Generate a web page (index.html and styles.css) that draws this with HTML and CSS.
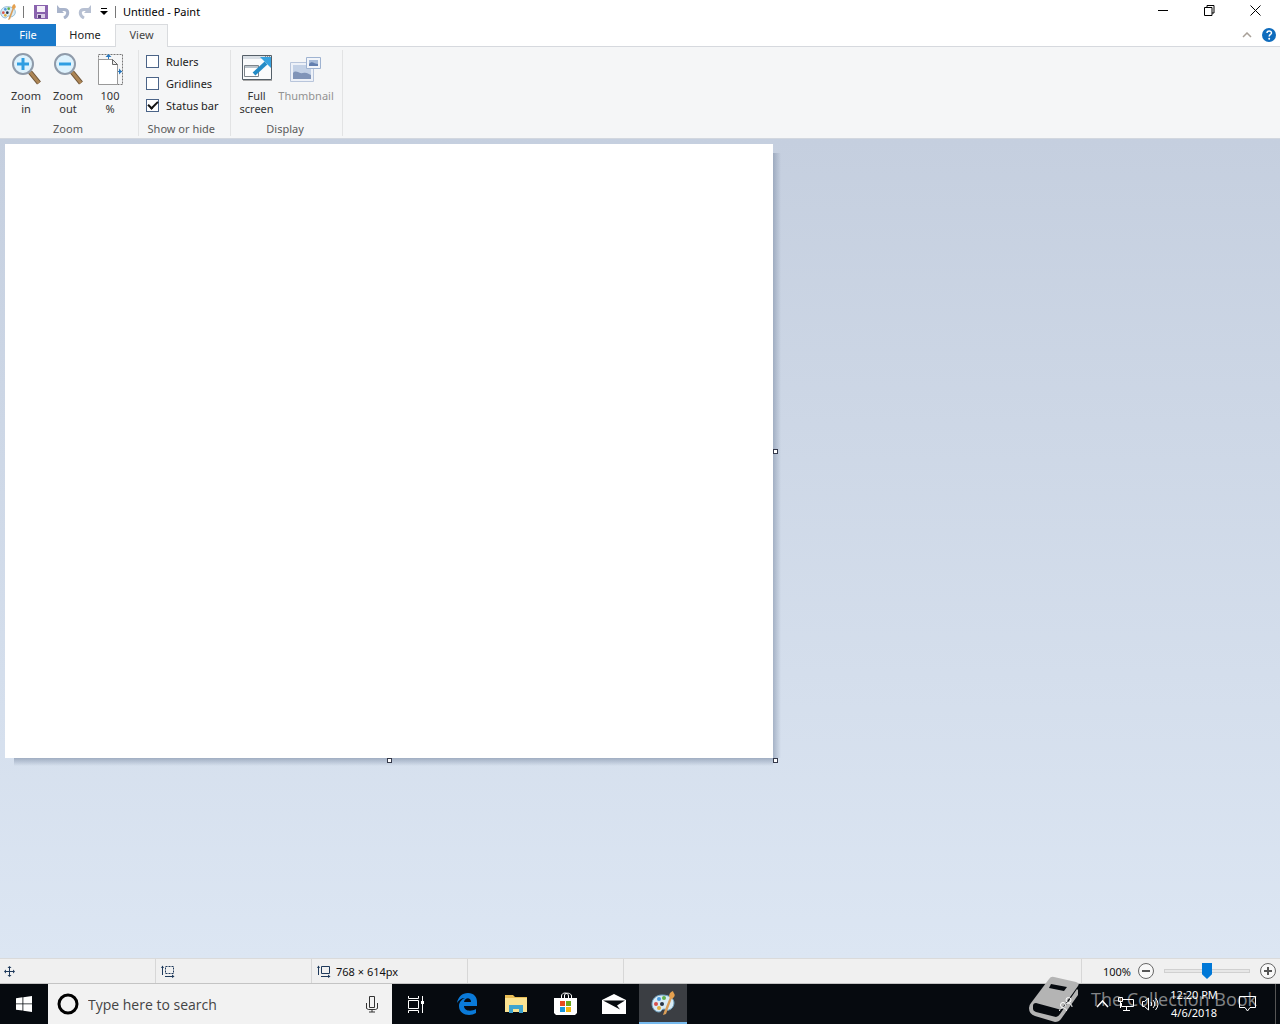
FILE: index.html
```html
<!DOCTYPE html>
<html lang="en">
<head>
<meta charset="utf-8">
<title>Untitled - Paint</title>
<link rel="stylesheet" href="styles.css">
</head>
<body>
<svg class="defs" aria-hidden="true">
  <symbol id="palette" viewBox="0 0 24 24">
    <path d="M11 4C5 4 1 8 1 13c0 4 3 8 7 8 3 0 2-3 5-3 2 0 3 2 5 1 3-1 5-4 5-7 0-5-5-8-12-8z" fill="#d9ebf5" stroke="#6fa3c2"/>
    <circle cx="5" cy="13" r="2" fill="#d8504a"/><circle cx="8" cy="8" r="2" fill="#4a9be0"/><circle cx="13" cy="7" r="2" fill="#62b04c"/><circle cx="8" cy="17" r="2" fill="#e0b040"/><circle cx="11" cy="13" r="2" fill="#273445"/>
    <path d="M19 6l2 1-6 16-3 1 1-3z" fill="#d99d58"/><path d="M18 6c0-3 1-5 4-6 0 2 3 3 1 6l-2 2z" fill="#e5a04e"/>
  </symbol>
</svg>

<header class="titlebar">
  <svg class="app-icon" viewBox="0 0 24 24"><use href="#palette"/></svg>
  <span class="divider"></span>
  <button class="quick" aria-label="Save"><svg width="14" height="14" viewBox="0 0 14 14"><path d="M0 0h14v14H1l-1-1z" fill="#8a63ae"/><path d="M3 1h8v6H3z" fill="#f4eef8"/><path d="M3 9h8v4H3z" fill="#d8cce4"/><path d="M4 10h3v3H4z" fill="#59407a"/></svg></button>
  <button class="quick" aria-label="Undo"><svg width="14" height="14" viewBox="0 0 14 14"><path d="M3 4.500h5c5 0 5 6 0 8.500" fill="none" stroke="#a9b4cb" stroke-width="3"/><path d="M1 0v8h7z" fill="#a9b4cb"/></svg></button>
  <button class="quick" aria-label="Redo"><svg width="14" height="14" viewBox="0 0 14 14"><path d="M11 4.500H6c-5 0-5 6 0 8.500" fill="none" stroke="#b7c0d2" stroke-width="3"/><path d="M13 0v8H6z" fill="#b7c0d2"/></svg></button>
  <button class="quick menu" aria-label="Customize"><svg width="8" height="7" viewBox="0 0 8 7"><path d="M1 0h6v1H1zM0 3h8L4 7z"/></svg></button>
  <span class="divider"></span>
  <h1 class="title">Untitled - Paint</h1>
  <div class="window-buttons">
    <button aria-label="Minimize"><svg width="11" height="11" viewBox="0 0 11 11"><path d="M0 5h10v1H0z"/></svg></button>
    <button aria-label="Restore"><svg width="11" height="11" viewBox="0 0 11 11"><path d="M.5 2.500h7.500v8H.5zM3 2.500V.5h7v7.500H8" fill="none" stroke="#000"/></svg></button>
    <button aria-label="Close"><svg width="11" height="11" viewBox="0 0 11 11"><path d="M.5.5l10 10M10.500.5l-10 10" stroke="#000"/></svg></button>
  </div>
</header>

<nav class="tabs">
  <button class="tab file">File</button>
  <button class="tab home">Home</button>
  <button class="tab view">View</button>
  <div class="tab-tools">
    <button aria-label="Collapse ribbon"><svg width="10" height="6" viewBox="0 0 10 6"><path d="M1 5l4-4 4 4" fill="none" stroke="#a8a098" stroke-width="1.500"/></svg></button>
    <button class="help" aria-label="Help"><svg width="14" height="14" viewBox="0 0 14 14"><circle cx="7" cy="7" r="7" fill="#0f6cbd"/><path d="M5 5c0-3 4.500-2.500 4.500 0 0 1.500-2.300 1.500-2.300 3.500" fill="none" stroke="#fff" stroke-width="1.500"/><circle cx="7.200" cy="10.700" r="1" fill="#fff"/></svg></button>
  </div>
</nav>

<section class="ribbon">
  <div class="group">
    <div class="tools">
      <button class="tool"><svg width="32" height="34" viewBox="0 0 32 34"><path d="M20 19l9 11" stroke="#6d5438" stroke-width="5"/><path d="M20 19l9 11" stroke="#ac8555" stroke-width="3"/><circle cx="13" cy="11" r="10" fill="#def2fd" stroke="#8f9baa" stroke-width="2"/><path d="M13 5v12M7 11h12" stroke="#2f9ee2" stroke-width="3"/></svg><span>Zoom in</span></button>
      <button class="tool"><svg width="32" height="34" viewBox="0 0 32 34"><path d="M20 19l9 11" stroke="#6d5438" stroke-width="5"/><path d="M20 19l9 11" stroke="#ac8555" stroke-width="3"/><circle cx="13" cy="11" r="10" fill="#def2fd" stroke="#8f9baa" stroke-width="2"/><path d="M7 11h12" stroke="#2f9ee2" stroke-width="3"/></svg><span>Zoom out</span></button>
      <button class="tool percent"><svg width="32" height="34" viewBox="0 0 32 34"><path d="M4.500 1.500h24v30h-24z" fill="none" stroke="#777" stroke-dasharray="2 1"/><path d="M4.500 6.500h14l5 5v20h-19z" fill="#fff" stroke="#999"/><path d="M18.500 6.500v5h5z" fill="#eee" stroke="#666"/><path d="M14.500 2v4M24 18.500h4" stroke="#2877bd"/><path d="M11.500 4L14.500 1l3 3zM25 15.500l3 3-3 3z" fill="#2877bd"/></svg><span>100 %</span></button>
    </div>
    <h2>Zoom</h2>
  </div>
  <div class="group">
    <div class="checks">
      <label><input type="checkbox">Rulers</label>
      <label><input type="checkbox">Gridlines</label>
      <label><input type="checkbox" checked>Status bar</label>
    </div>
    <h2>Show or hide</h2>
  </div>
  <div class="group">
    <div class="tools">
      <button class="tool"><svg width="32" height="34" viewBox="0 0 32 34"><path d="M1.500 2.500h29v24h-29z" fill="#fafbfc" stroke="#555f68"/><path d="M2 3h28v3H2z" fill="#d9dfe5"/><path d="M24 4h1M26 4h1M28 4h1" stroke="#333"/><path d="M3.500 12.500h14v11h-14z" fill="#fff" stroke="#7d858c"/><path d="M4 13h13v2H4z" fill="#bcc4cb"/><path d="M2 27.500h29" stroke="#aaa"/><path d="M13 21L25 10" stroke="#248bc6" stroke-width="4"/><path d="M19 4h11v11z" fill="#36a2df"/></svg><span>Full screen</span></button>
      <button class="tool wide" disabled><svg width="32" height="34" viewBox="0 0 32 34"><path d="M.5 9.500h23v19H.5z" fill="#edf1f8" stroke="#b8c5db"/><path d="M3 12h18v14H3z" fill="#c3d1e6"/><path d="M3 20c3-4 6 1 10 0s5 1 8 2v4H3z" fill="#8094b8"/><path d="M16.500 4.500h14v11h-14z" fill="#f2f5fa" stroke="#9fb3d1"/><path d="M19 7h9v6h-9z" fill="#a6bad8"/><path d="M19 11c3-4 5 0 9 0v2h-9z" fill="#637faf"/></svg><span>Thumbnail</span></button>
    </div>
    <h2>Display</h2>
  </div>
</section>

<main class="workspace">
  <div class="canvas">
    <i class="handle east"></i><i class="handle south"></i><i class="handle corner"></i>
  </div>
</main>

<footer class="statusbar">
  <div class="cell"><svg width="11" height="11" viewBox="0 0 11 11"><path d="M5.500 1v9M1 5.500h9" stroke="#1e395b"/><path d="M5.500 0l2 2h-4zM5.500 11l2-2h-4zM0 5.500l2-2v4zM11 5.500l-2-2v4z" fill="#1e395b"/></svg></div>
  <div class="cell"><svg width="14" height="13" viewBox="0 0 14 13"><path d="M4.500 1.500h8v7h-8z" fill="none" stroke="#1e395b" stroke-dasharray="2 1"/><path d="M1.500 10V1M4 11.500h8" stroke="#1e395b"/><path d="M0 3l1.500-2.500L3 3zM11 9.500l2.500 2-2.500 1.500z" fill="#1e395b"/></svg></div>
  <div class="cell"><svg width="14" height="13" viewBox="0 0 14 13"><path d="M4.500 1.500h8v7h-8z" fill="none" stroke="#1e395b"/><path d="M1.500 10V1M4 11.500h8" stroke="#1e395b"/><path d="M0 3l1.500-2.500L3 3zM11 9.500l2.500 2-2.500 1.500z" fill="#1e395b"/></svg><span>768 × 614px</span></div>
  <div class="cell"></div>
  <div class="zoom">
    <label for="zoom">100%</label>
    <button aria-label="Zoom out"><svg width="16" height="16" viewBox="0 0 16 16"><circle cx="8" cy="8" r="7.500" fill="#f8f8f8" stroke="#666"/><path d="M4 7h8v2H4z" fill="#555"/></svg></button>
    <input id="zoom" type="range" min="0" max="100" value="50">
    <button aria-label="Zoom in"><svg width="16" height="16" viewBox="0 0 16 16"><circle cx="8" cy="8" r="7.500" fill="#f8f8f8" stroke="#666"/><path d="M4 7h8v2H4zM7 4h2v8H7z" fill="#555"/></svg></button>
  </div>
</footer>

<div class="taskbar">
  <button class="start" aria-label="Start"><svg width="16" height="16" viewBox="0 0 16 16"><path d="M0 2.300l6.500-1v6.200H0zM7.300 1.200L16 0v7.500H7.300zM0 8.300h6.500v6.300L0 13.700zM7.300 8.300H16V16l-8.700-1.200z" fill="#fff"/></svg></button>
  <div class="search">
    <svg width="22" height="22" viewBox="0 0 22 22"><circle cx="11" cy="11" r="9" fill="none" stroke="#000" stroke-width="3"/></svg>
    <input type="text" aria-label="Search" placeholder="Type here to search">
    <svg width="12" height="18" viewBox="0 0 12 18"><path d="M3.500 1.500h5v11h-5zM.5 8v5.500l2 1h7l2-1V8M6 15v2M3 17h6" fill="none" stroke="#333"/></svg>
  </div>
  <div class="apps">
    <button aria-label="Task view"><svg width="18" height="17" viewBox="0 0 18 17"><path d="M1.500 4.500h10v8h-10zM1.500 0v2.500h10V0M1.500 17v-2.500h10V17M15.500 0v17" fill="none" stroke="#fff"/><path d="M14 5h3v3h-3z" fill="#fff"/></svg></button>
    <button aria-label="Edge"><svg width="20" height="22" viewBox="0 0 20 22"><path d="M0 10C1 4 5 0 11 0c6 0 9 4 9 9v4H7c0 5 7 6 12 3v4c-6 4-17 2-17-7 0-4 3-7 6-8-4 0-6 2-8 5zm7-1h7c0-5-6-5-7 0z" fill="#0a7ad8"/></svg></button>
    <button aria-label="File Explorer"><svg width="22" height="20" viewBox="0 0 22 20"><path d="M0 1h8l2 2h12v15H0z" fill="#e8bd55"/><path d="M0 4h22v14H0z" fill="#fbe391"/><path d="M4 19v-8h14v8h-4v-4H8v4z" fill="#3fa4cf"/></svg></button>
    <button aria-label="Store"><svg width="23" height="24" viewBox="0 0 23 24"><path d="M7.500 7V4c0-4 7-4 7 0v3M10.500 6V3c1-3 7-2 7 1v2" fill="none" stroke="#fff"/><path d="M0 6h23v15l-2 2H2l-2-2z" fill="#fff"/><path d="M6 9h5v5H6z" fill="#e64a20"/><path d="M12 9h5v5h-5z" fill="#6ba81e"/><path d="M6 15h5v5H6z" fill="#1998dd"/><path d="M12 15h5v5h-5z" fill="#f5b70c"/></svg></button>
    <button aria-label="Mail"><svg width="24" height="20" viewBox="0 0 24 20"><path d="M0 6l12-6 12 6v14H0z" fill="#fff"/><path d="M1 6.500h22l-8 5 3 4z" fill="#080c10"/></svg></button>
    <button class="active" aria-label="Paint"><svg width="24" height="24" viewBox="0 0 24 24"><use href="#palette"/></svg></button>
  </div>
  <div class="watermark">
    <svg width="50" height="46" viewBox="0 0 50 46"><path fill-rule="evenodd" d="M20 3q2-3 5-2l22 5q4 1 2 4L34 31q-2 3-5 2L7 27q-3 0-3 3v3q0 2 3 3l20 5q2 0 4-3l17-25 1 1v5L32 43q-2 3-6 3L6 40q-6-2-6-8 0-3 2-5zM22 8l-2 4 15 3 3-4z" fill="#b4b4b4"/></svg>
    <span>The Collection Book</span>
  </div>
  <div class="tray">
    <button class="people" aria-label="People"><svg width="14" height="15" viewBox="0 0 14 15"><g fill="none" stroke="#fff"><circle cx="9.500" cy="3" r="2.500"/><circle cx="4" cy="8" r="2.500"/><path d="M.5 14c0-4 7-4 7 0M7 7c3-2 6 0 6 3"/></g></svg></button>
    <button class="more" aria-label="Hidden icons"><svg width="13" height="8" viewBox="0 0 13 8"><path d="M1 7l5.500-6L12 7" fill="none" stroke="#fff" stroke-width="1.500"/></svg></button>
    <button aria-label="Network"><svg width="16" height="14" viewBox="0 0 16 14"><path d="M5 2.500h10.500v7H3.500V6M8.500 10v3M5 13.500h7M.5.5h4v4h-4zM2.500 5v6" fill="none" stroke="#fff"/></svg></button>
    <button aria-label="Volume"><svg width="17" height="14" viewBox="0 0 17 14"><path d="M.5 4.500h2l4-3.500v12l-4-3.500h-2zM9 5q1.500 2 0 4M11 3q3.500 4 0 8M13.500 1q5 6 0 12" fill="none" stroke="#fff"/></svg></button>
    <button class="clock"><span>12:20 PM</span><span>4/6/2018</span></button>
    <button class="action" aria-label="Action center"><svg width="17" height="16" viewBox="0 0 17 16"><path d="M.5.5h16v11H11L8.500 15 6 11.500H.5z" fill="none" stroke="#fff"/></svg></button>
    <button class="desktop" aria-label="Show desktop"></button>
  </div>
</div>
</body>
</html>
```

FILE: styles.css
```css
* { box-sizing: border-box; }
body { margin: 0; height: 100vh; display: flex; flex-direction: column; overflow: hidden; background: #fff; color: #222; font: 11px/13px "Noto Sans", "Open Sans", sans-serif; }
button { display: flex; align-items: center; justify-content: center; margin: 0; padding: 0; border: 0; background: none; color: inherit; font: inherit; }
svg { display: block; flex: none; }
h1, h2 { margin: 0; font: inherit; }
.defs { display: none; }

.titlebar { display: flex; align-items: center; height: 24px; flex: none; padding-bottom: 1px; }
.app-icon { width: 16px; height: 18px; }
.divider { width: 1px; height: 12px; background: #777; }
.app-icon + .divider { margin: 0 6px 0 7px; }
.quick { width: 22px; height: 22px; }
.menu { width: 16px; margin-right: 3px; }
.titlebar .title { margin-left: 7px; color: #000; }
.window-buttons { display: flex; margin-left: auto; padding: 0 2px 2px 0; }
.window-buttons button { width: 46px; height: 20px; }

.tabs { display: flex; height: 23px; flex: none; border-bottom: 1px solid #d6d9de; }
.tab { height: 22px; padding-bottom: 1px; }
.file { width: 56px; background: #1979ca; color: #fff; }
.home { width: 58px; }
.view { width: 53px; height: 23px; margin-left: 1px; padding-bottom: 3px; border: 1px solid #d9dbde; border-bottom: 0; background: #f5f6f7; color: #444; }
.tab-tools { display: flex; gap: 10px; margin-left: auto; padding-right: 4px; }

.ribbon { display: flex; height: 92px; flex: none; padding-top: 3px; background: #f5f6f7; border-bottom: 1px solid #d2d7df; }
.group { display: flex; flex-direction: column; padding: 0 7px 0 5px; border-right: 1px solid #e2e3e4; margin-bottom: 2px; }
.group:nth-child(2) { padding-right: 11px; }
.group h2 { margin-top: auto; line-height: 14px; text-align: center; color: #5a5a5a; }
.tools { display: flex; padding-top: 3px; }
.tool { flex-direction: column; justify-content: flex-start; width: 42px; gap: 2px; color: #333; }
.tool span { width: 36px; }
.percent span { width: 24px; }
.wide { width: 57px; color: #929292; }
.wide span { width: auto; }
.checks { display: grid; grid-auto-rows: 22px; padding-left: 2px; }
.checks label { display: flex; align-items: center; gap: 7px; }
.checks input { appearance: none; display: grid; place-items: center; width: 13px; height: 13px; margin: 0; border: 1px solid #4b6488; background: #fff; }
.checks input:checked::after { content: ""; width: 8px; height: 4px; border: solid #111; border-width: 0 0 2px 2px; transform: rotate(-45deg); margin-bottom: 3px; }

.workspace { flex: 1; min-height: 0; padding: 5px; background: linear-gradient(#c5cfdf, #dce6f3); }
.canvas { position: relative; width: 768px; height: 614px; background: #fff; }
.canvas::before { content: ""; position: absolute; left: 100%; top: 9px; bottom: 0; width: 8px; background: linear-gradient(90deg, #76869f80, #76869f00); }
.canvas::after { content: ""; position: absolute; left: 9px; right: 0; top: 100%; height: 8px; background: linear-gradient(#76869f90, #76869f00); }
.handle { position: absolute; z-index: 1; width: 5px; height: 5px; border: 1px solid #35394a; background: #fff; }
.east { left: 100%; top: 50%; margin-top: -2px; }
.south { left: 50%; top: 100%; margin-left: -2px; }
.corner { left: 100%; top: 100%; }

.statusbar { display: flex; height: 26px; flex: none; background: #f0f0f0; border-top: 1px solid #dadada; border-bottom: 1px solid #c4c4c4; color: #111; }
.cell { display: flex; align-items: center; gap: 5px; width: 156px; padding-left: 5px; border-right: 1px solid #d7d7d7; }
.cell:first-child { padding-left: 4px; }
.zoom { display: flex; align-items: center; gap: 7px; margin-left: auto; padding: 0 4px 0 21px; border-left: 1px solid #d7d7d7; }
.zoom input { appearance: none; width: 92px; height: 20px; margin: 0; padding: 0 3px; background: none; }
.zoom input::-webkit-slider-runnable-track { height: 4px; border: 1px solid #d0d0d0; background: #e7e7e7; }
.zoom input::-webkit-slider-thumb { appearance: none; width: 10px; height: 16px; margin-top: -7px; background: #0078d7; clip-path: polygon(0 0, 100% 0, 100% 70%, 50% 100%, 0 70%); }

.taskbar { position: relative; display: flex; height: 40px; flex: none; background: #060a0f; color: #fff; }
.start { width: 48px; }
.search { display: flex; align-items: center; width: 344px; padding: 0 14px 0 9px; background: #f2f2f2; }
.search input { flex: 1; min-width: 0; border: 0; padding: 1px 9px 0; background: none; font: 14px/20px "Open Sans", sans-serif; }
.search input::placeholder { color: #444; opacity: 1; }
.apps { display: flex; gap: 1px; }
.apps button { width: 48px; }
.apps button:first-child { margin-right: 2px; }
.apps .active { background: #3b3e43; border-bottom: 2px solid #76b9ed; }
.tray { position: relative; display: flex; align-items: center; margin-left: auto; }
.tray button { width: 24px; height: 40px; }
.tray .people { width: 48px; }
.tray .clock { flex-direction: column; width: 64px; font-size: 11px; line-height: 18px; }
.tray .action { width: 43px; }
.tray .desktop { width: 5px; margin-left: 6px; border-left: 1px solid #555; }
.watermark { position: absolute; right: 23px; bottom: 2px; display: flex; align-items: center; gap: 12px; color: #ffffff80; font: 18px/20px "Open Sans", sans-serif; white-space: nowrap; }
```
